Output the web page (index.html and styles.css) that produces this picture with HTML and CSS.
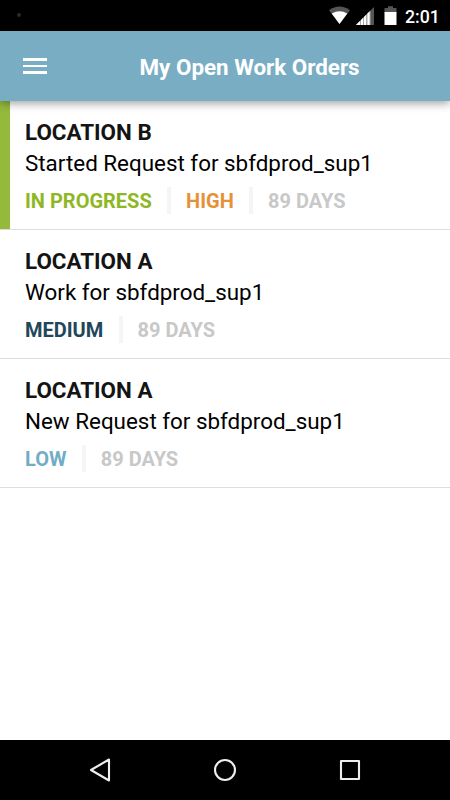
FILE: index.html
```html
<!DOCTYPE html>
<html lang="en">
<head>
<meta charset="utf-8">
<title>My Open Work Orders</title>
<link rel="stylesheet" href="styles.css">
</head>
<body>
<div class="status">
  <span class="dot"></span>
  <svg class="status-icons" width="70" height="31" viewBox="0 0 70 31">
    <path d="M0 10.3Q10.5 2.8 21 10.3L10.5 24Z" fill="#555"/>
    <path d="M2.7 13.5Q10.5 8.8 18.3 13.5L10.5 24Z" fill="#fff"/>
    <path d="M27 25L45 7V25Z" fill="#555"/>
    <path d="M27 25L41.5 10.5V25Z" fill="#aaa"/>
    <path d="M27 25L31 21V25ZM32 25V20L34 18V25ZM35 25V17L37 15V25ZM38.5 25V13.5L40.5 11.5V25Z" fill="#fff"/>
    <path d="M55.5 8H59V6.3H64V8H67.5V13H55.5Z" fill="#555"/>
    <path d="M55.5 12H67.5V25H55.5Z" fill="#fff"/>
  </svg>
  <span class="clock">2:01</span>
</div>
<header class="bar">
  <div class="menu"><i></i><i></i><i></i></div>
  <h1>My Open Work Orders</h1>
</header>
<main class="list">
  <article class="order active">
    <h2>LOCATION B</h2>
    <p>Started Request for sbfdprod_sup1</p>
    <div class="meta"><span class="progress">IN PROGRESS</span><span class="high">HIGH</span><span class="days">89 DAYS</span></div>
  </article>
  <article class="order">
    <h2>LOCATION A</h2>
    <p>Work for sbfdprod_sup1</p>
    <div class="meta"><span class="medium">MEDIUM</span><span class="days">89 DAYS</span></div>
  </article>
  <article class="order">
    <h2>LOCATION A</h2>
    <p>New Request for sbfdprod_sup1</p>
    <div class="meta"><span class="low">LOW</span><span class="days">89 DAYS</span></div>
  </article>
</main>
<nav class="nav">
  <svg width="24" height="24" viewBox="0 0 24 24"><path d="M3 12L21 1.5V22.5Z"/></svg>
  <svg width="24" height="24" viewBox="0 0 24 24"><circle cx="12" cy="12" r="10"/></svg>
  <svg width="24" height="24" viewBox="0 0 24 24"><rect x="3" y="3" width="18" height="18"/></svg>
</nav>
</body>
</html>
```
FILE: styles.css
```css
* { box-sizing: border-box; }
body {
  margin: 0;
  width: 450px;
  height: 800px;
  display: flex;
  flex-direction: column;
  overflow: hidden;
  background: #fff;
  color: #000;
  font-family: Roboto, "Liberation Sans", sans-serif;
}
.status {
  height: 31px;
  flex: none;
  display: flex;
  align-items: center;
  background: #000;
  color: #fff;
}
.dot {
  width: 4px;
  height: 4px;
  margin: -1px 0 0 17px;
  border-radius: 50%;
  background: #2a2a2a;
}
.status-icons { margin-left: 308px; }
.clock {
  margin: 2px 0 0 6px;
  font-size: 17.7px;
  font-weight: 500;
  line-height: 22px;
}
.bar {
  position: relative;
  z-index: 1;
  height: 70px;
  flex: none;
  display: flex;
  align-items: center;
  background: #78adc4;
  box-shadow: 0 2px 9px rgba(0, 0, 0, .4);
}
.menu {
  display: flex;
  flex-direction: column;
  gap: 4px;
  margin-left: 23px;
}
.menu i {
  width: 24px;
  height: 2.6px;
  background: #fff;
}
.bar h1 {
  margin: 2px 0 0 92.5px;
  color: #fff;
  font-size: 22.4px;
  font-weight: 700;
  line-height: 28px;
  white-space: nowrap;
}
.list { flex: 1; }
.order {
  height: 129px;
  padding: 16px 0 0 25px;
  border-bottom: 1px solid #dedede;
}
.active { background: linear-gradient(#95ba3b, #95ba3b) no-repeat 0 0 / 10px 100%; }
.order h2, .order p {
  margin: 0;
  font-size: 22.4px;
  line-height: 30px;
  white-space: nowrap;
}
.order h2 { color: #141414; font-weight: 700; }
.order p { line-height: 32px; font-weight: 400; }
.meta {
  display: flex;
  margin-top: 8px;
  font-size: 20px;
  font-weight: 700;
  line-height: 29px;
}
.meta span + span {
  margin-left: 15.3px;
  padding-left: 19px;
  background: linear-gradient(#f5f5f5, #f5f5f5) no-repeat 0 0 / 4px 27px;
}
.progress { color: #8fb724; }
.high { color: #e69138; }
.medium { color: #224759; }
.low { color: #72acc5; }
.days { color: #c8c8c8; }
.nav {
  height: 60px;
  flex: none;
  display: flex;
  align-items: center;
  justify-content: center;
  gap: 101px;
  background: #000;
}
.nav svg {
  fill: none;
  stroke: #eee;
  stroke-width: 2.1;
  stroke-linejoin: round;
}
```
